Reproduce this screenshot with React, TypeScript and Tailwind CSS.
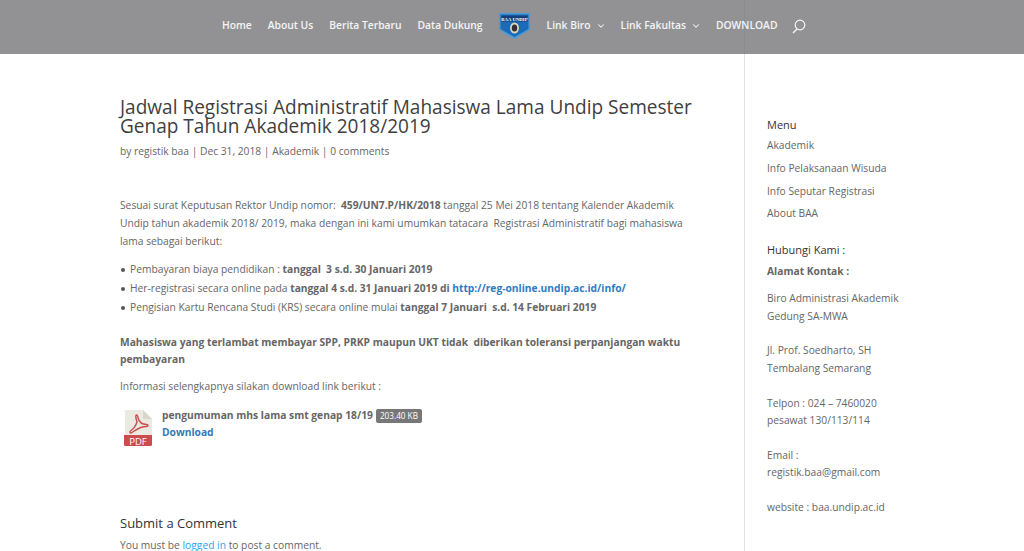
import { ChevronDown } from "lucide-react";

function Pdf() {
  return (
    <svg width="29" height="37" viewBox="0 0 29 37" className="shrink-0">
      <path d="M1 0H19L28 9V28H1Z" fill="#eaeae2" />
      <path d="M19 0L28 9H19Z" fill="#d9d7ca" />
      <path d="M0 25H28V34.500Q28 36 26.500 36H1.500Q0 36 0 34.500Z" fill="#cc4b4c" />
      <path d="M12.500 5C11.500 5 11.500 8 13 12C12 15 10 18.500 7 20.500C5 22 6 24 8 22.500C11 20.500 16 16.500 22.500 16.500C24.500 16.500 24.500 14.500 22.500 14.500C18 14.500 15 11.500 14 8C13.800 6.500 13.500 5 12.500 5Z" fill="none" stroke="#cc4b4c" strokeWidth="1.400" />
      <text x="14" y="34.500" textAnchor="middle" fontSize="9.500" fill="#fff" fontFamily="'Open Sans', sans-serif">PDF</text>
    </svg>
  );
}

const NavItem = ({ label, chevron }: { label: string; chevron?: boolean }) => (
  <a className="flex items-center whitespace-nowrap">
    {label}
    {chevron && <ChevronDown size={10} strokeWidth={2.5} className="ml-[5px] mr-[-1px] mt-px" />}
  </a>
);

const SideLink = ({ children }: { children: string }) => (
  <li className="h-[22.800px] leading-[22.800px]">{children}</li>
);

const Bullet = ({ children }: { children: React.ReactNode }) => (
  <li className="flex h-[19px] items-center">
    <span className="ml-[1px] mr-[5px] h-[4px] w-[4px] shrink-0 rounded-full bg-[#555]" />
    <span className="whitespace-nowrap">{children}</span>
  </li>
);

export default function App() {
  return (
    <div className="relative h-[551px] w-[1024px] overflow-hidden bg-white font-['Open_Sans',sans-serif] text-[10.250px] text-[#666]">
      <header className="absolute inset-x-0 top-0 z-10 flex h-[54px] items-start bg-[#6d6e71]/75 pl-[222px] pt-[18px] text-[10.300px] font-semibold leading-[14px] text-white/90">
        <nav className="flex items-start gap-[16px]">
          <NavItem label="Home" />
          <NavItem label="About Us" />
          <NavItem label="Berita Terbaru" />
          <NavItem label="Data Dukung" />
          <svg width="31" height="26" viewBox="0 0 31 26" className="-mt-[5px] mr-px">
            <path d="M0 0H31V17L15.500 26L0 17Z" fill="#4a9ad8" />
            <path d="M1.500 1.500H29.500V16L15.500 24L1.500 16Z" fill="#1a6cb8" />
            <rect x="2.500" y="2.500" width="26" height="6" fill="#14407c" />
            <text x="15.500" y="7.500" textAnchor="middle" fontSize="4.800" fontWeight="700" fill="#fff" fontFamily="'Liberation Serif', serif">BAA UNDIP</text>
            <ellipse cx="15.500" cy="15" rx="4.500" ry="5.500" fill="#d9d3c0" />
            <ellipse cx="15.500" cy="15" rx="2.700" ry="3.500" fill="#33302e" />
          </svg>
          <NavItem label="Link Biro" chevron />
          <NavItem label="Link Fakultas" chevron />
          <NavItem label="DOWNLOAD" />
          <svg width="14" height="15" viewBox="0 0 14 15" fill="none" stroke="#fff" strokeOpacity="0.9" strokeWidth="1.200" className="ml-[-1px] mt-[1px]">
            <circle cx="8" cy="6" r="4.800" />
            <path d="M5 10L1 14" strokeWidth="1.500" />
          </svg>
        </nav>
      </header>

      <div className="flex h-full pl-[120px]">
        <main className="w-[625px] shrink-0 border-r border-[#e2e2e2] pr-[45px] pt-[98px]">
          <h1 className="text-[19.050px] font-normal leading-[19px] text-[#3f3f3f]">
            Jadwal Registrasi Administratif Mahasiswa Lama Undip Semester Genap Tahun Akademik 2018/2019
          </h1>
          <p className="mt-[6px] h-[18px] whitespace-nowrap leading-[18px]">by registik baa | Dec 31, 2018 | Akademik | 0 comments</p>
          <p className="mt-[36px] leading-[18px]">
            Sesuai surat Keputusan Rektor Undip nomor:&nbsp; <b>459/UN7.P/HK/2018</b> tanggal 25 Mei 2018 tentang Kalender Akademik Undip tahun akademik 2018/ 2019, maka dengan ini kami umumkan tatacara&nbsp; Registrasi Administratif bagi mahasiswa lama sebagai berikut:
          </p>
          <ul className="mt-[10px]">
            <Bullet>Pembayaran biaya pendidikan : <b>tanggal&nbsp; 3 s.d. 30 Januari 2019</b></Bullet>
            <Bullet>Her-registrasi secara online pada <b>tanggal 4 s.d. 31 Januari 2019 di <a className="text-[#2d7dc4]">http://reg-online.undip.ac.id/info/</a></b></Bullet>
            <Bullet>Pengisian Kartu Rencana Studi (KRS) secara online mulai <b>tanggal 7 Januari&nbsp; s.d. 14 Februari 2019</b></Bullet>
          </ul>
          <p className="mt-[16.500px] font-bold leading-[17.500px]">
            Mahasiswa yang terlambat membayar SPP, PRKP maupun UKT tidak&nbsp; diberikan toleransi perpanjangan waktu pembayaran
          </p>
          <p className="mt-[8.500px] leading-[18px]">Informasi selengkapnya silakan download link berikut :</p>
          <div className="ml-[4px] mt-[15px] flex gap-[9px]">
            <Pdf />
            <div className="-mt-[4px]">
              <div className="flex h-[20px] items-center font-bold">
                pengumuman mhs lama smt genap 18/19
                <span className="ml-[3px] rounded-[2px] bg-[#777] px-[4px] text-[8.200px] font-normal leading-[14px] text-white">203.40 KB</span>
              </div>
              <a className="block font-bold leading-[13px] text-[#337ab7]">Download</a>
            </div>
          </div>
          <h2 className="mt-[67px] text-[13px] font-normal leading-[18px] text-[#333]">Submit a Comment</h2>
          <p className="mt-[4px] leading-[18px]">You must be <a className="text-[#2ea3f2]">logged in</a> to post a comment.</p>
        </main>
        <aside className="pl-[22px] pt-[118px]">
          <h4 className="text-[11px] font-normal leading-[14px] text-[#333]">Menu</h4>
          <ul className="mt-[2px]">
            <SideLink>Akademik</SideLink>
            <SideLink>Info Pelaksanaan Wisuda</SideLink>
            <SideLink>Info Seputar Registrasi</SideLink>
            <SideLink>About BAA</SideLink>
          </ul>
          <h4 className="mt-[18px] text-[11px] font-normal leading-[14px] text-[#333]">Hubungi Kami :</h4>
          <p className="mt-[7px] font-bold leading-[14px]">Alamat Kontak :</p>
          <div className="mt-[12px] leading-[17.400px]">
            <p>Biro Administrasi Akademik<br />Gedung SA-MWA</p>
            <p className="mt-[17.400px]">Jl. Prof. Soedharto, SH<br />Tembalang Semarang</p>
            <p className="mt-[17.400px]">Telpon : 024 – 7460020<br />pesawat 130/113/114</p>
            <p className="mt-[17.400px]">Email :<br />registik.baa@gmail.com</p>
            <p className="mt-[17.400px]">website : baa.undip.ac.id</p>
          </div>
        </aside>
      </div>
    </div>
  );
}
